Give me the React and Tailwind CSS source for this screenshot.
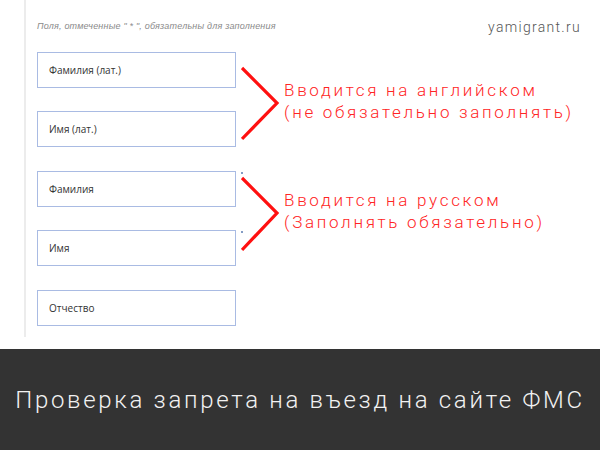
export default function App() {
  const field = 'h-[36px] w-[199px] border border-[#a9bbe3] bg-white flex items-center pl-[11px] text-[10px] text-[#333] font-["Open_Sans",sans-serif]';
  const note = 'text-[17px] leading-[22px] tracking-[2.7px] text-[#ff2424] font-light font-["Roboto",sans-serif]';

  return (
    <div className="w-[600px] h-[450px] bg-white flex flex-col overflow-hidden">
      {/* Form area */}
      <div className="h-[349px] flex">
        <div className="ml-[24px] h-[337px] w-[2px] bg-[#ececec]" />
        <div className="flex-1 pl-[11px] flex flex-col">
          <div className="flex items-start justify-between pt-[19px]">
            <p className="mt-[1px] text-[9px] tracking-[0.2px] italic text-[#8a8a8a] font-['Liberation_Sans',sans-serif]">
              Поля, отмеченные " * ", обязательны для заполнения
            </p>
            <span className="mr-[19px] -mt-[2px] text-[14px] tracking-[1.3px] text-[#555] font-light font-['Roboto',sans-serif]">
              yamigrant.ru
            </span>
          </div>

          {/* Latin names */}
          <div className="flex mt-[14px]">
            <div className="flex flex-col gap-[23px]">
              <div className={field}>Фамилия (лат.)</div>
              <div className={field}>Имя (лат.)</div>
            </div>
            <svg width="42" height="95" viewBox="0 0 42 95" className="ml-[5px]">
              <path d="M1 16 L36 51 L1 87" fill="none" stroke="#ff1010" strokeWidth="3.2" />
            </svg>
            <div className={`${note} ml-[1px] mt-[27px]`}>
              <div>Вводится на английском</div>
              <div>(не обязательно заполнять)</div>
            </div>
          </div>

          {/* Russian names */}
          <div className="flex mt-[24px]">
            <div className="flex flex-col gap-[23px]">
              <div className={field}>Фамилия</div>
              <div className={field}>Имя</div>
            </div>
            <div className="relative ml-[5px]">
              <span className="absolute left-[0px] top-[1px] w-[2px] h-[2px] rounded-full bg-[#5b7bb0]" />
              <span className="absolute left-[0px] top-[60px] w-[2px] h-[2px] rounded-full bg-[#5b7bb0]" />
              <svg width="42" height="95" viewBox="0 0 42 95">
                <path d="M1 7 L36 42 L1 79" fill="none" stroke="#ff1010" strokeWidth="3.2" />
              </svg>
            </div>
            <div className={`${note} ml-[1px] mt-[18px]`}>
              <div>Вводится на русском</div>
              <div>(Заполнять обязательно)</div>
            </div>
          </div>

          <div className={`${field} mt-[24px]`}>Отчество</div>
        </div>
      </div>

      {/* Caption bar */}
      <div className="flex-1 bg-[#333333] flex items-center justify-center">
        <p className="text-[24px] tracking-[2.7px] text-[#f2f2f2] font-light font-['Roboto',sans-serif]">
          Проверка запрета на въезд на сайте ФМС
        </p>
      </div>
    </div>
  );
}
